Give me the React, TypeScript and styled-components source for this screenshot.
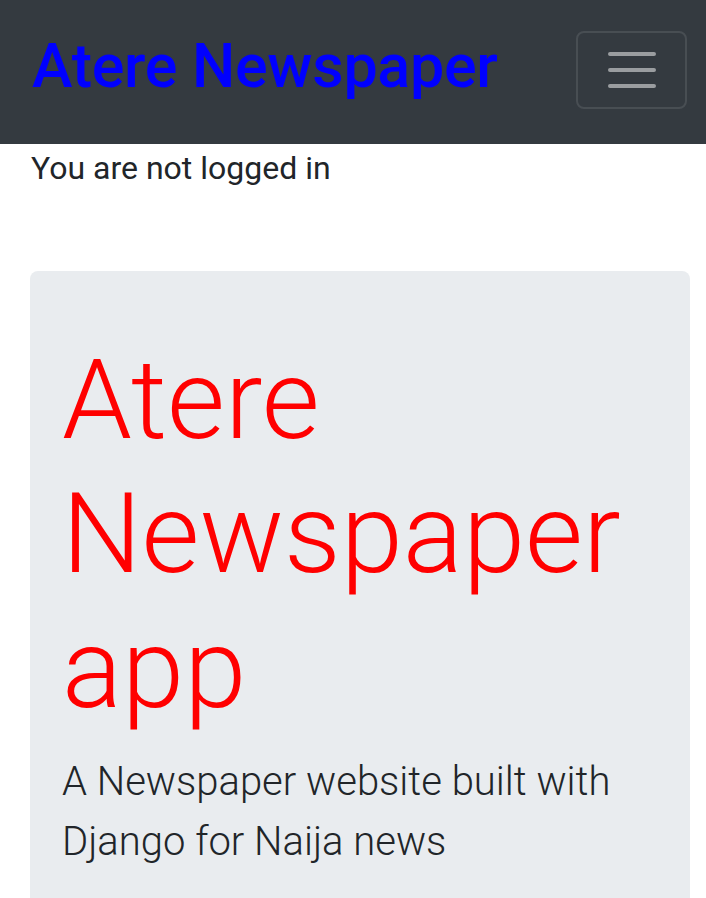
import styled, { createGlobalStyle } from "styled-components";

const GlobalStyle = createGlobalStyle`
  html, body {
    margin: 0;
    padding: 0;
    background: #fff;
  }
  body {
    font-family: Roboto, "Liberation Sans", sans-serif;
    color: #212529;
    line-height: 1.5;
    overflow: hidden;
  }
`;

const Navbar = styled.nav`
  height: 144px;
  box-sizing: border-box;
  background-color: #343a40;
  display: flex;
  align-items: center;
  justify-content: space-between;
  padding: 0 19px 0 32px;
`;

const Brand = styled.a`
  color: #0000ff;
  font-size: 61px;
  font-weight: 500;
  letter-spacing: -0.3px;
  line-height: 1;
  text-decoration: none;
  margin-top: -11px;
`;

const Toggler = styled.button`
  width: 111px;
  height: 78px;
  box-sizing: border-box;
  margin-top: -5px;
  background: transparent;
  border: 2px solid rgba(255, 255, 255, 0.1);
  border-radius: 8px;
  display: flex;
  align-items: center;
  justify-content: center;
  padding: 0;
`;

const Container = styled.main`
  padding: 0 16px 0 30px;
`;

const Status = styled.p`
  margin: 0 0 79px 1px;
  font-size: 32px;
  line-height: 48px;
`;

const Jumbotron = styled.section`
  background-color: #e9ecef;
  border-radius: 8px;
  padding: 62px 32px 64px;
  min-height: 700px;
`;

const Display = styled.h1`
  margin: 0 0 16px;
  color: #ff0000;
  font-size: 112px;
  font-weight: 300;
  line-height: 134.4px;
`;

const Lead = styled.p`
  margin: 0;
  font-size: 40px;
  font-weight: 300;
  line-height: 60px;
`;

function TogglerIcon() {
  return (
    <svg width="60" height="60" viewBox="0 0 30 30">
      <path
        stroke="rgba(255,255,255,0.5)"
        strokeLinecap="round"
        strokeMiterlimit={10}
        strokeWidth={2}
        d="M4 7h22M4 15h22M4 23h22"
      />
    </svg>
  );
}

export default function App() {
  return (
    <>
      <GlobalStyle />
      <Navbar>
        <Brand href="#">Atere Newspaper</Brand>
        <Toggler aria-label="Toggle navigation">
          <TogglerIcon />
        </Toggler>
      </Navbar>
      <Container>
        <Status>You are not logged in</Status>
        <Jumbotron>
          <Display>Atere Newspaper app</Display>
          <Lead>A Newspaper website built with Django for Naija news</Lead>
        </Jumbotron>
      </Container>
    </>
  );
}
